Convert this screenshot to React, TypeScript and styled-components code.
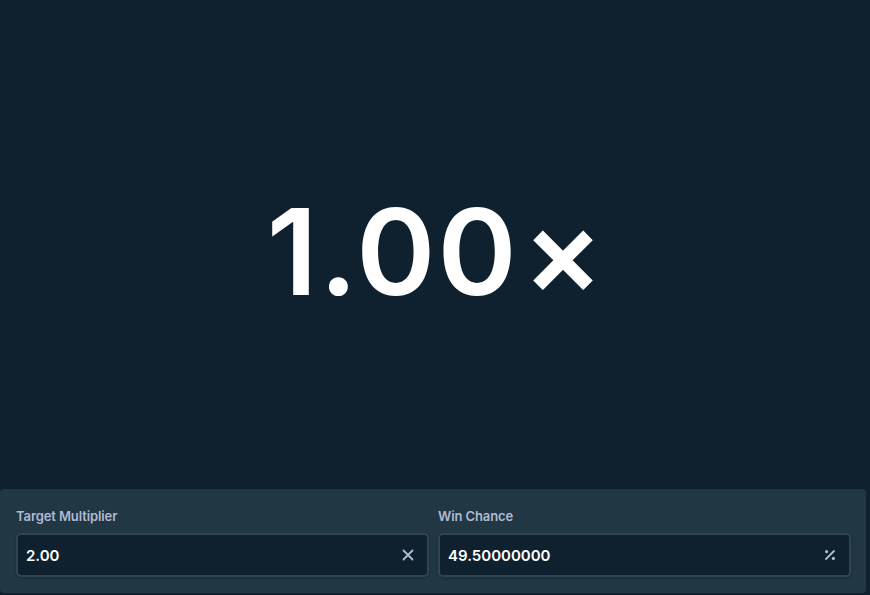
import React from "react";
import styled, { createGlobalStyle } from "styled-components";

const Global = createGlobalStyle`
  html, body { margin: 0; padding: 0; background: #0f212e; }
  body { font-family: "Inter", "Noto Sans", sans-serif; }
  #root { height: 100vh; }
`;

const Page = styled.div`
  height: 100vh;
  display: flex;
  flex-direction: column;
  background: #0f212e;
`;

const Stage = styled.div`
  flex: 1;
  display: flex;
  align-items: center;
  justify-content: center;
  padding-top: 14px;
`;

const Multiplier = styled.div`
  color: #fff;
  font-family: "Inter", sans-serif;
  font-weight: 600;
  font-size: 120px;
  line-height: 1;
  display: flex;
  align-items: baseline;
  letter-spacing: 2px;
`;

const Times = styled.span`
  font-size: 120px;
  margin-left: 4px;
  font-weight: 600;
  letter-spacing: 0;
`;

const Panel = styled.div`
  margin: 0 4px 2px 0;
  background: #213743;
  border-radius: 4px;
  padding: 16px 15px 16px 16px;
  display: grid;
  grid-template-columns: 1fr 1fr;
  gap: 9px;
`;

const Field = styled.div`
  display: flex;
  flex-direction: column;
  gap: 6px;
`;

const Label = styled.label`
  color: #b1bad3;
  font-size: 13px;
  font-weight: 600;
  line-height: 22px;
  letter-spacing: -0.1px;
`;

const InputWrap = styled.div`
  height: 44px;
  box-sizing: border-box;
  background: #0f212e;
  border: 2px solid #2f4553;
  border-radius: 5px;
  display: flex;
  align-items: center;
  padding: 0 13px 0 8px;
  box-shadow: 0 1px 3px rgba(0,0,0,0.2);
`;

const Value = styled.span`
  flex: 1;
  color: #fff;
  font-size: 15px;
  font-weight: 600;
`;

const Suffix = styled.span`
  color: #b1bad3;
  display: flex;
  align-items: center;
`;

export default function App() {
  return (
    <Page>
      <Global />
      <Stage>
        <Multiplier>
          1.00<Times>×</Times>
        </Multiplier>
      </Stage>
      <Panel>
        <Field>
          <Label>Target Multiplier</Label>
          <InputWrap>
            <Value>2.00</Value>
            <Suffix>
              <svg width="12" height="12" viewBox="0 0 12 12">
                <path d="M1.5 1.5 L10.5 10.5 M10.5 1.5 L1.5 10.5" stroke="currentColor" strokeWidth="1.8" strokeLinecap="round" />
              </svg>
            </Suffix>
          </InputWrap>
        </Field>
        <Field>
          <Label>Win Chance</Label>
          <InputWrap>
            <Value>49.50000000</Value>
            <Suffix>
              <svg width="12" height="12" viewBox="0 0 12 12">
                <path d="M10 2 L2 10" stroke="currentColor" strokeWidth="1.8" strokeLinecap="round" />
                <circle cx="2.6" cy="2.6" r="1.6" fill="currentColor" />
                <circle cx="9.4" cy="9.4" r="1.6" fill="currentColor" />
              </svg>
            </Suffix>
          </InputWrap>
        </Field>
      </Panel>
    </Page>
  );
}
